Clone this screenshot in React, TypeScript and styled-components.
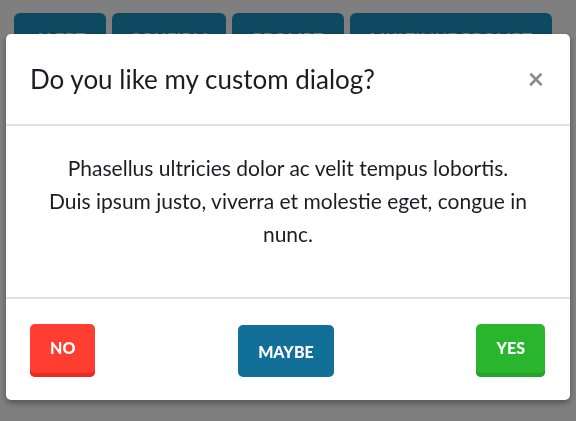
import React from "react";
import styled, { createGlobalStyle } from "styled-components";

const Global = createGlobalStyle`
  html, body { margin: 0; padding: 0; background: #ffffff; }
  body { font-family: "Lato", "Open Sans", sans-serif; }
  * { box-sizing: border-box; }
`;

const Page = styled.div`
  width: 576px;
  height: 421px;
  overflow: hidden;
`;

const Toolbar = styled.div`
  display: flex;
  gap: 6px;
  padding: 13px 0 0 14px;
`;

const DemoButton = styled.button<{ $w: number }>`
  width: ${(p) => p.$w}px;
  height: 48px;
  border: 0;
  border-radius: 6px;
  background: #1b94c4;
  color: #ffffff;
  font-family: "Lato", sans-serif;
  font-weight: 700;
  font-size: 16px;
  letter-spacing: 0.5px;
  padding: 0;
  text-transform: uppercase;
`;

const Overlay = styled.div`
  position: fixed;
  inset: 0;
  background: rgba(0, 0, 0, 0.5);
  padding: 34px 6px 0 6px;
`;

const Dialog = styled.div`
  width: 564px;
  background: #ffffff;
  border-radius: 5px;
  box-shadow: 0 3px 6px rgba(0, 0, 0, 0.35);
  color: #1c1c24;
`;

const Header = styled.div`
  display: flex;
  align-items: center;
  justify-content: space-between;
  height: 92px;
  padding: 0 26px 0 24px;
  border-bottom: 2px solid #e0e0e0;
`;

const Title = styled.h2`
  margin: 0;
  font-family: "Lato", sans-serif;
  font-weight: 400;
  font-size: 26px;
  color: #1c1c24;
`;

const Close = styled.button`
  border: 0;
  background: none;
  padding: 0;
  color: #8a8a8a;
  font-family: "Lato", sans-serif;
  font-weight: 700;
  font-size: 28px;
  line-height: 1;
  margin-bottom: 2px;
`;

const Body = styled.div`
  height: 171px;
  padding: 25px 24px 0;
  text-align: center;
  font-size: 21px;
  line-height: 33px;
  color: #1c1c24;
`;

const Footer = styled.div`
  display: flex;
  justify-content: space-between;
  align-items: flex-start;
  padding: 25px 25px 23px 24px;
  border-top: 2px solid #e0e0e0;
`;

const ActionButton = styled.button<{ $bg: string; $edge?: string }>`
  height: ${(p) => (p.$edge ? "53px" : "52px")};
  margin-top: ${(p) => (p.$edge ? "0" : "1px")};
  padding: 0 20px;
  padding-bottom: ${(p) => (p.$edge ? "6px" : "0")};
  border: 0;
  border-radius: 5px;
  background: ${(p) => p.$bg};
  box-shadow: ${(p) => (p.$edge ? `inset 0 -4px 0 ${p.$edge}` : "none")};
  color: #ffffff;
  font-family: "Lato", sans-serif;
  font-weight: 900;
  font-size: 16px;
`;

export default function App() {
  return (
    <Page>
      <Global />
      <Toolbar>
        <DemoButton $w={92}>Alert</DemoButton>
        <DemoButton $w={114}>Confirm</DemoButton>
        <DemoButton $w={112}>Prompt</DemoButton>
        <DemoButton $w={202}>Multiline prompt</DemoButton>
      </Toolbar>
      <Overlay>
        <Dialog>
          <Header>
            <Title>Do you like my custom dialog?</Title>
            <Close aria-label="Close">×</Close>
          </Header>
          <Body>
            Phasellus ultricies dolor ac velit tempus lobortis.
            <br />
            Duis ipsum justo, viverra et molestie eget, congue in nunc.
          </Body>
          <Footer>
            <ActionButton $bg="#ff3d30" $edge="#ec2a1f">NO</ActionButton>
            <ActionButton $bg="#126f97">MAYBE</ActionButton>
            <ActionButton $bg="#2ab52f" $edge="#24a22a">YES</ActionButton>
          </Footer>
        </Dialog>
      </Overlay>
    </Page>
  );
}
